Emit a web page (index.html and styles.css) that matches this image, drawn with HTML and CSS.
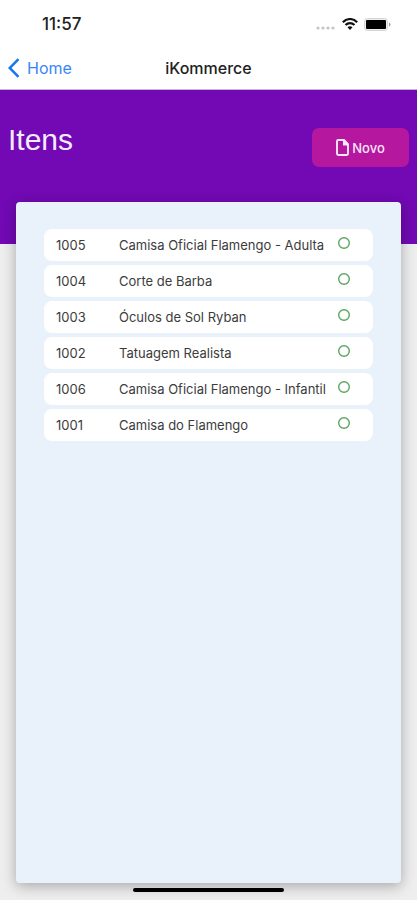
FILE: index.html
```html
<!DOCTYPE html>
<html lang="pt-BR">
<head>
<meta charset="utf-8">
<meta name="viewport" content="width=device-width, initial-scale=1">
<title>iKommerce</title>
<link rel="stylesheet" href="styles.css">
</head>
<body>
<div class="status">
  <time class="clock">11:57</time>
  <div class="indicators">
    <svg class="signal" viewBox="0 0 20 4" aria-hidden="true"><g fill="#c4c4c4"><circle cx="2" cy="2" r="1.6"/><circle cx="7" cy="2" r="1.6"/><circle cx="12" cy="2" r="1.6"/><circle cx="17" cy="2" r="1.6"/></g></svg>
    <svg class="wifi" viewBox="0 0 16 12" aria-hidden="true"><g fill="none" stroke="#111" stroke-width="2.1"><path d="M.8 4.3C5-.1 11-.1 15.200 4.300"/><path d="M3.500 7.100C6 4.500 10 4.500 12.500 7.100"/></g><path d="M8 12 5.500 9.300C6.900 8 9.100 8 10.500 9.300Z" fill="#111"/></svg>
    <svg class="battery" viewBox="0 0 27 13" aria-hidden="true"><rect x=".5" y=".5" width="23" height="12" rx="3" fill="#eee" stroke="#d4d4d4"/><rect x="2" y="2" width="20" height="9" rx="1" fill="#000"/><path d="M25 4.500c2 .8 2 3.200 0 4Z" fill="#999"/></svg>
  </div>
</div>
<nav class="nav">
  <a class="back" href="#">
    <svg class="chevron" viewBox="0 0 12 20" aria-hidden="true"><path d="M10.500 1.200 1.700 10l8.800 8.800" fill="none" stroke="#1677f2" stroke-width="2.500"/></svg>
    Home
  </a>
  <span class="nav-title">iKommerce</span>
</nav>
<header class="hero">
  <h1 class="title">Itens</h1>
  <button class="new" type="button">
    <svg class="file" viewBox="0 0 13 17" aria-hidden="true"><path d="M2.200 1H8l4 4.200v9.600a1.200 1.200 0 0 1-1.200 1.200H2.200A1.200 1.200 0 0 1 1 14.800V2.200A1.200 1.200 0 0 1 2.200 1Z" fill="none" stroke="#fbe6f8" stroke-width="1.900" stroke-linejoin="round"/><path d="M7 1h1.500L12 4.800V6.500H7Z" fill="#fbe6f8"/></svg>
    Novo
  </button>
</header>
<main class="card">
  <table class="items" aria-label="Itens">
    <colgroup><col class="col-code"><col><col class="col-state"></colgroup>
    <tbody>
      <tr><td>1005</td><td>Camisa Oficial Flamengo - Adulta</td><td><svg class="ring" viewBox="0 0 14 14" aria-hidden="true"><circle cx="7" cy="7" r="5.300"/></svg></td></tr>
      <tr><td>1004</td><td>Corte de Barba</td><td><svg class="ring" viewBox="0 0 14 14" aria-hidden="true"><circle cx="7" cy="7" r="5.300"/></svg></td></tr>
      <tr><td>1003</td><td>Óculos de Sol Ryban</td><td><svg class="ring" viewBox="0 0 14 14" aria-hidden="true"><circle cx="7" cy="7" r="5.300"/></svg></td></tr>
      <tr><td>1002</td><td>Tatuagem Realista</td><td><svg class="ring" viewBox="0 0 14 14" aria-hidden="true"><circle cx="7" cy="7" r="5.300"/></svg></td></tr>
      <tr><td>1006</td><td>Camisa Oficial Flamengo - Infantil</td><td><svg class="ring" viewBox="0 0 14 14" aria-hidden="true"><circle cx="7" cy="7" r="5.300"/></svg></td></tr>
      <tr><td>1001</td><td>Camisa do Flamengo</td><td><svg class="ring" viewBox="0 0 14 14" aria-hidden="true"><circle cx="7" cy="7" r="5.300"/></svg></td></tr>
    </tbody>
  </table>
</main>
<footer class="home-bar"><div class="home-indicator"></div></footer>
</body>
</html>
```
FILE: styles.css
```css
* {
  box-sizing: border-box;
}

body {
  margin: 0;
  min-height: 100vh;
  display: flex;
  flex-direction: column;
  background: #eee;
  color: #3c3c3c;
  font-family: Inter, "Liberation Sans", sans-serif;
}

svg {
  display: block;
}

.status {
  display: flex;
  justify-content: space-between;
  align-items: center;
  height: 48px;
  padding: 0 26px 0 42px;
  background: #fff;
}

.clock {
  color: #222;
  font-size: 17px;
  font-weight: 500;
}

.indicators {
  display: flex;
  align-items: center;
  gap: 6px;
}

.signal {
  width: 20px;
  height: 4px;
  margin-top: 8px;
}

.wifi {
  width: 16px;
  height: 12px;
}

.battery {
  width: 27px;
  height: 13px;
}

.nav {
  display: grid;
  grid-template-columns: 1fr auto 1fr;
  align-items: center;
  height: 42px;
  padding: 0 8px 2px;
  background: #fff;
  border-bottom: 1px solid #c9b3dc;
}

.back {
  display: flex;
  align-items: center;
  gap: 7px;
  color: #3b86f7;
  font-size: 16px;
  text-decoration: none;
}

.chevron {
  width: 12px;
  height: 20px;
}

.nav-title {
  color: #222;
  font-size: 16px;
  font-weight: 500;
}

.hero {
  display: flex;
  justify-content: space-between;
  align-items: flex-start;
  height: 154px;
  padding: 32px 8px 0;
  background: #7209b4;
}

.title {
  margin: 0;
  color: #f6eafd;
  font-family: "Liberation Sans", sans-serif;
  font-size: 30px;
  font-weight: 400;
  line-height: 36px;
}

.new {
  display: flex;
  justify-content: center;
  align-items: center;
  gap: 3px;
  width: 97px;
  height: 39px;
  margin-top: 6px;
  padding: 0;
  border: 0;
  border-radius: 7px;
  background: #b5179e;
  color: #fbe6f8;
  font: 500 13px Inter, "Liberation Sans", sans-serif;
}

.file {
  width: 13px;
  height: 17px;
}

.card {
  flex: 1;
  margin: -42px 16px 0;
  padding: 23px 28px;
  border-radius: 4px;
  background: #e9f1fb;
  box-shadow: 0 3px 14px rgba(0, 0, 0, 0.3);
}

.items {
  width: 100%;
  table-layout: fixed;
  border-collapse: separate;
  border-spacing: 0 4px;
  font-size: 13px;
  line-height: 16px;
}

.col-code {
  width: 75px;
}

.col-state {
  width: 42px;
}

.items td {
  height: 32px;
  padding: 0;
  background: #fff;
  white-space: nowrap;
}

.items td:first-child {
  padding-left: 12px;
  border-radius: 8px 0 0 8px;
}

.items td:last-child {
  padding: 0 0 4px 6px;
  border-radius: 0 8px 8px 0;
}

.ring {
  width: 14px;
  height: 14px;
  fill: none;
  stroke: #5ba55f;
  stroke-width: 1.4;
}

.home-bar {
  display: flex;
  justify-content: center;
  height: 17px;
  padding-top: 5px;
}

.home-indicator {
  position: relative;
  width: 36%;
  height: 4px;
  border-radius: 2px;
  background: #000;
}
```
